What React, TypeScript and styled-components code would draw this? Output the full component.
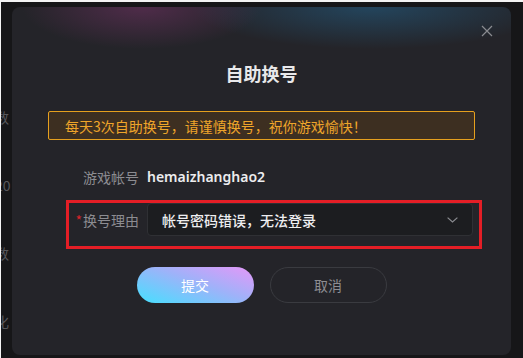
import styled, { createGlobalStyle } from "styled-components";

const GlobalStyle = createGlobalStyle`
  html, body {
    margin: 0;
    padding: 0;
    background: #ffffff;
  }
  body {
    font-family: "Noto Sans", "Noto Sans CJK SC", sans-serif;
  }
`;

const CJK = `"Noto Sans CJK SC", "Noto Sans", sans-serif`;

const App = () => {
  return (
    <>
      <GlobalStyle />
      <Screen>
        <PageBehind>
          <SideItem>数</SideItem>
          <SideItem>20</SideItem>
          <SideItem>数</SideItem>
          <SideItem>化</SideItem>
        </PageBehind>

        <Overlay>
          <Modal>
            <CloseBtn aria-label="close">
              <svg width="12" height="12" viewBox="0 0 12 12">
                <path d="M1 1 L11 11 M11 1 L1 11" stroke="#8a8b90" strokeWidth="1.2" fill="none" />
              </svg>
            </CloseBtn>

            <Title>自助换号</Title>

            <Notice>每天3次自助换号，请谨慎换号，祝你游戏愉快！</Notice>

            <Form>
              <FormRow>
                <Label>游戏帐号</Label>
                <AccountValue>hemaizhanghao2</AccountValue>
              </FormRow>
              <FormRow>
                <Label>
                  <Required>*</Required>换号理由
                </Label>
                <Select>
                  <span>帐号密码错误，无法登录</span>
                  <svg width="11" height="6" viewBox="0 0 11 6">
                    <path d="M0.6 0.6 L5.5 5 L10.4 0.6" stroke="#8a8b90" strokeWidth="1.2" fill="none" />
                  </svg>
                </Select>
              </FormRow>
            </Form>

            <Actions>
              <SubmitBtn>提交</SubmitBtn>
              <CancelBtn>取消</CancelBtn>
            </Actions>

            {/* red annotation drawn over the screenshot */}
            <Highlight />
          </Modal>
        </Overlay>
      </Screen>
    </>
  );
};

export default App;

// styled-components
const Screen = styled.div`
  position: relative;
  width: 523px;
  height: 358px;
  box-sizing: border-box;
  border-top: 2px solid #f4f4f4;
  border-left: 1px solid #f4f4f4;
  background: #161618;
  overflow: hidden;
`;

const PageBehind = styled.div`
  display: flex;
  flex-direction: column;
  padding-top: 105px;
  margin-left: -6px;
`;

const SideItem = styled.div`
  height: 68px;
  line-height: 20px;
  font-family: ${CJK};
  font-size: 14px;
  color: #58585c;
`;

const Overlay = styled.div`
  position: absolute;
  inset: 0;
  display: flex;
  align-items: flex-start;
  padding: 5px 0 0 11px;
`;

const Modal = styled.div`
  position: relative;
  width: 499px;
  height: 348px;
  border-radius: 8px;
  display: flex;
  flex-direction: column;
  align-items: center;
  background:
    radial-gradient(ellipse 120px 42px at 130px 0, rgba(140, 55, 120, 0.42), rgba(140, 55, 120, 0) 100%),
    radial-gradient(ellipse 180px 42px at 360px 0, rgba(35, 115, 165, 0.42), rgba(35, 115, 165, 0) 100%),
    #242429;
`;

const CloseBtn = styled.button`
  position: absolute;
  top: 18px;
  right: 18px;
  width: 12px;
  height: 12px;
  padding: 0;
  border: none;
  background: transparent;
  display: flex;
  cursor: pointer;
`;

const Title = styled.h2`
  margin: 54px 0 0;
  font-family: ${CJK};
  font-size: 18px;
  line-height: 24px;
  font-weight: 700;
  color: #e8e8ea;
`;

const Notice = styled.div`
  margin-top: 26px;
  align-self: stretch;
  margin-left: 36px;
  margin-right: 36px;
  height: 29px;
  box-sizing: border-box;
  border: 1px solid #e6a01e;
  border-radius: 2px;
  background: #3d2f21;
  padding-left: 16px;
  display: flex;
  align-items: center;
  font-family: ${CJK};
  font-size: 14px;
  color: #efa52a;
`;

const Form = styled.div`
  margin-top: 20px;
  align-self: stretch;
  padding: 0 38px 0 62px;
  display: flex;
  flex-direction: column;
  gap: 10px;
`;

const FormRow = styled.div`
  display: grid;
  grid-template-columns: 65px 1fr;
  column-gap: 8px;
  align-items: center;
  height: 33px;
`;

const Label = styled.label`
  text-align: right;
  font-family: ${CJK};
  font-size: 14px;
  color: #8c8c91;
  white-space: nowrap;
`;

const Required = styled.span`
  color: #d8232a;
  margin-right: 1px;
`;

const AccountValue = styled.span`
  font-family: "Noto Sans", ${CJK};
  font-size: 14px;
  font-weight: 600;
  color: #ececee;
`;

const Select = styled.div`
  height: 33px;
  box-sizing: border-box;
  border: 1px solid #2f3034;
  border-radius: 4px;
  background: #1c1d20;
  display: flex;
  align-items: center;
  justify-content: space-between;
  padding: 0 14px 0 14px;
  font-family: ${CJK};
  font-size: 14px;
  font-weight: 500;
  color: #eeeef0;
`;

const Actions = styled.div`
  margin-top: 31px;
  display: flex;
  gap: 16px;
`;

const PillBtn = styled.button`
  width: 117px;
  height: 36px;
  border-radius: 18px;
  font-family: ${CJK};
  font-size: 14px;
  cursor: pointer;
`;

const SubmitBtn = styled(PillBtn)`
  border: none;
  color: #ffffff;
  background: linear-gradient(20deg, #45e0ff 0%, #9fb2f9 55%, #e597f8 100%);
`;

const CancelBtn = styled(PillBtn)`
  border: 1px solid #3a3b40;
  background: transparent;
  color: #8d8d92;
`;

const Highlight = styled.div`
  position: absolute;
  left: 54px;
  top: 193px;
  width: 416px;
  height: 49px;
  box-sizing: border-box;
  border: 3px solid #e41e26;
  pointer-events: none;
`;
